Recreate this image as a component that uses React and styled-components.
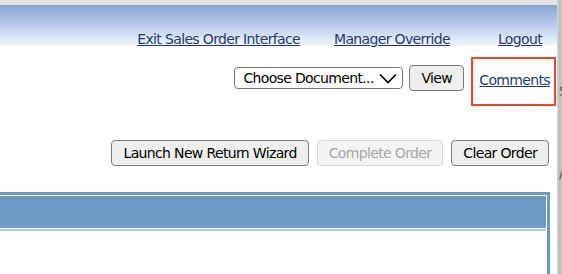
import React from "react";
import styled, { createGlobalStyle } from "styled-components";

const GlobalStyle = createGlobalStyle`
  html, body {
    margin: 0;
    padding: 0;
    background: #ffffff;
    overflow: hidden;
  }
  body {
    font-family: "DejaVu Sans", Tahoma, sans-serif;
    letter-spacing: -0.65px;
  }
`;

const Page = styled.div`
  display: flex;
  flex-direction: row;
  width: 562px;
  height: 274px;
  overflow: hidden;
`;

const Main = styled.div`
  width: 557px;
  flex-shrink: 0;
  display: flex;
  flex-direction: column;
`;

const Divider = styled.div`
  width: 5px;
  flex-shrink: 0;
  background: linear-gradient(to right, #d6d6d6, #b9b9b9 60%, #cfcfcf);
  overflow: hidden;
  display: flex;
  flex-direction: column;
  color: #555;
  font-size: 14px;
`;

const Glyph = styled.span`
  display: block;
  margin-left: 2px;
  margin-top: ${(p) => p.$top}px;
  line-height: 14px;
`;

const TopStrip = styled.div`
  height: 5px;
  background: #e3e3e3;
`;

const Header = styled.div`
  height: 41px;
  background: linear-gradient(to bottom, #87a6d2 0%, #b4c9e6 45%, #f4f7fc 100%);
  display: flex;
  justify-content: flex-end;
  align-items: flex-end;
  padding-right: 15px;
  box-sizing: border-box;
`;

const NavLink = styled.a`
  color: #1d3b78;
  font-size: 14px;
  text-decoration: underline;
  margin-left: ${(p) => p.$gap || 0}px;
  line-height: ${(p) => p.$lh || 17}px;
  white-space: nowrap;
  cursor: pointer;
`;

const ToolRow = styled.div`
  display: flex;
  justify-content: flex-end;
  align-items: flex-start;
  margin-top: 11px;
  padding-right: 1px;
`;

const SelectBox = styled.div`
  margin-top: 10px;
  width: 169px;
  height: 22px;
  border: 1px solid #767676;
  border-radius: 4px;
  background: #fff;
  display: flex;
  align-items: center;
  justify-content: space-between;
  padding: 0 5px 0 8px;
  font-size: 14px;
  color: #000;
  box-sizing: border-box;
  white-space: nowrap;
`;

const Button = styled.button`
  font-family: inherit;
  letter-spacing: inherit;
  font-size: 14px;
  height: 26px;
  padding: 0 11px;
  border: 1px solid ${(p) => (p.disabled ? "#d9d9d9" : "#7a7a7a")};
  border-radius: 4px;
  background: ${(p) => (p.disabled ? "#f4f4f4" : "#efefef")};
  color: ${(p) => (p.disabled ? "#a6a6a6" : "#000")};
  margin-left: ${(p) => p.$gap || 0}px;
  margin-top: ${(p) => p.$top || 0}px;
  white-space: nowrap;
`;

const Highlight = styled.div`
  margin-left: 7px;
  width: 85px;
  height: 49px;
  border: 2px solid #e8472d;
  display: flex;
  align-items: flex-start;
  justify-content: flex-end;
  padding: 13px 4px 0 0;
  box-sizing: border-box;
`;

const ButtonRow = styled.div`
  display: flex;
  justify-content: flex-end;
  margin-top: 34px;
  padding-right: 8px;
`;

const Panel = styled.div`
  margin-top: 26px;
  margin-left: -10px;
  margin-right: 7px;
  flex: 1;
  border: 3px solid #6e98c6;
  border-bottom: none;
  padding: 1px;
  background: #fff;
`;

const PanelHead = styled.div`
  height: 32px;
  background: #6e98c6;
  border-bottom: 1px solid #ffffff;
  box-shadow: 0 2px 0 #aec3de;
`;

function Chevron() {
  return (
    <svg width="18" height="11" viewBox="0 0 18 11">
      <path d="M1 1.5 L9 9.5 L17 1.5" fill="none" stroke="#000" strokeWidth="1.6" />
    </svg>
  );
}

export default function App() {
  return (
    <>
      <GlobalStyle />
      <Page>
        <Main>
          <TopStrip />
          <Header>
            <NavLink $lh={13}>Exit Sales Order Interface</NavLink>
            <NavLink $lh={13} $gap={34}>
              Manager Override
            </NavLink>
            <NavLink $lh={13} $gap={48}>
              Logout
            </NavLink>
          </Header>

          <ToolRow>
            <SelectBox>
              <span>Choose Document...</span>
              <Chevron />
            </SelectBox>
            <Button $gap={6} $top={8}>
              View
            </Button>
            <Highlight>
              <NavLink>Comments</NavLink>
            </Highlight>
          </ToolRow>

          <ButtonRow>
            <Button>Launch New Return Wizard</Button>
            <Button $gap={8} disabled>
              Complete Order
            </Button>
            <Button $gap={8}>Clear Order</Button>
          </ButtonRow>

          <Panel>
            <PanelHead />
          </Panel>
        </Main>
        <Divider>
          <Glyph $top={84}>S</Glyph>
          <Glyph $top={68}>/</Glyph>
        </Divider>
      </Page>
    </>
  );
}
